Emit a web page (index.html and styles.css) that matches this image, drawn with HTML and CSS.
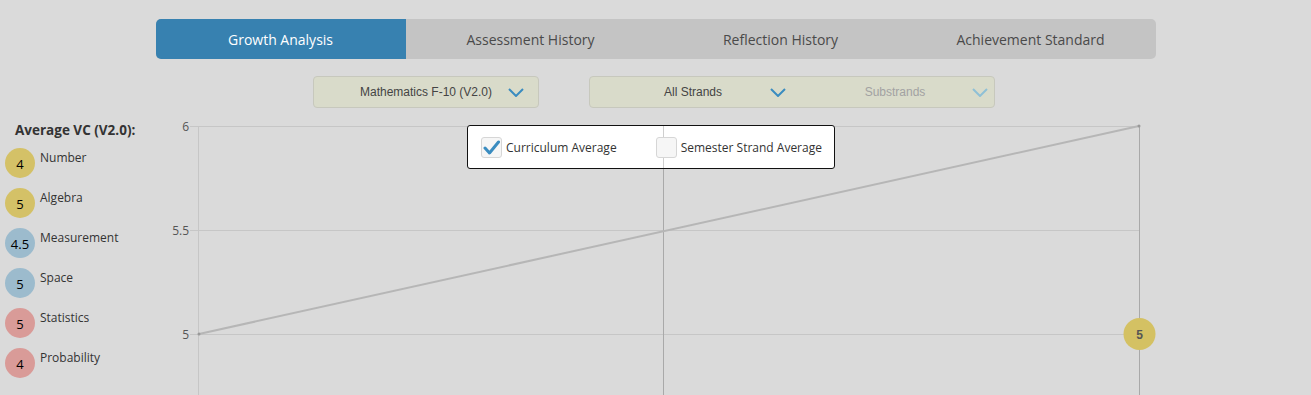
FILE: index.html
```html
<!DOCTYPE html>
<html lang="en">
<head>
    <meta charset="UTF-8">
    <title>Growth Analysis</title>
    <link rel="stylesheet" href="styles.css">
</head>
<body>
    <div class="tabs">
        <a href="#" class="tab active">Growth Analysis</a>
        <a href="#" class="tab">Assessment History</a>
        <a href="#" class="tab">Reflection History</a>
        <a href="#" class="tab">Achievement Standard</a>
    </div>

    <div class="filters">
        <div class="select select-curriculum">
            <span>Mathematics F-10 (V2.0)</span>
            <svg class="chevron" width="16" height="9" viewBox="0 0 16 9"><path d="M1 1 L8 8 L15 1" fill="none" stroke="#3a8cc0" stroke-width="2"/></svg>
        </div>
        <div class="select select-strands">
            <div class="half">
                <span>All Strands</span>
                <svg class="chevron" width="16" height="9" viewBox="0 0 16 9"><path d="M1 1 L8 8 L15 1" fill="none" stroke="#3a8cc0" stroke-width="2"/></svg>
            </div>
            <div class="half disabled">
                <span>Substrands</span>
                <svg class="chevron" width="16" height="9" viewBox="0 0 16 9"><path d="M1 1 L8 8 L15 1" fill="none" stroke="#8fc0d6" stroke-width="2"/></svg>
            </div>
        </div>
    </div>

    <div class="main">
        <div class="sidebar">
            <h3>Average VC (V2.0):</h3>
            <div class="strand"><span class="dot yellow">4</span><span class="name">Number</span></div>
            <div class="strand"><span class="dot yellow">5</span><span class="name">Algebra</span></div>
            <div class="strand"><span class="dot blue">4.5</span><span class="name">Measurement</span></div>
            <div class="strand"><span class="dot blue">5</span><span class="name">Space</span></div>
            <div class="strand"><span class="dot red">5</span><span class="name">Statistics</span></div>
            <div class="strand"><span class="dot red">4</span><span class="name">Probability</span></div>
        </div>

        <div class="chart">
            <svg width="1151" height="277" viewBox="0 0 1151 277">
                <g stroke="#c6c6c6" stroke-width="1">
                    <line x1="30" y1="8.5" x2="979" y2="8.5"/>
                    <line x1="30" y1="112.5" x2="979" y2="112.5"/>
                    <line x1="30" y1="216.5" x2="979" y2="216.5"/>
                    <line x1="38.5" y1="8" x2="38.5" y2="277"/>
                </g>
                <g stroke="#a9a9a9" stroke-width="1">
                    <line x1="503.5" y1="8" x2="503.5" y2="277"/>
                    <line x1="979.5" y1="8" x2="979.5" y2="277"/>
                </g>
                <g class="axis-label">
                    <text x="29" y="12.5" text-anchor="end">6</text>
                    <text x="29" y="116.5" text-anchor="end">5.5</text>
                    <text x="29" y="220.5" text-anchor="end">5</text>
                </g>
                <line x1="39" y1="216" x2="979" y2="8" stroke="#b6b6b6" stroke-width="2"/>
                <circle cx="39" cy="216" r="1.5" fill="#999"/>
                <circle cx="979" cy="8" r="1.5" fill="#999"/>
                <circle cx="979.5" cy="216" r="16" fill="#d4c163"/>
                <text class="point-label" x="979.5" y="220.5" text-anchor="middle">5</text>
            </svg>

            <div class="legend">
                <label class="legend-item">
                    <span class="box">
                        <svg width="17" height="15" viewBox="0 0 17 15"><path d="M2 8 L6.5 13 L15.5 2" fill="none" stroke="#3a8cc0" stroke-width="3" stroke-linecap="round" stroke-linejoin="round"/></svg>
                    </span>
                    Curriculum Average
                </label>
                <label class="legend-item">
                    <span class="box"></span>
                    Semester Strand Average
                </label>
            </div>
        </div>
    </div>
</body>
</html>
```

FILE: styles.css
```css
body {
    font-family: "Open Sans", Arial, sans-serif;
    margin: 0;
    padding: 0;
    background-color: #dadada;
    color: #444;
    height: 395px;
    overflow: hidden;
}

.tabs {
    display: flex;
    width: 1000px;
    height: 40px;
    margin: 19px auto 0;
    background-color: #c4c4c4;
    border-radius: 5px;
    overflow: hidden;
}

.tab {
    flex: 1;
    display: flex;
    align-items: center;
    justify-content: center;
    font-size: 14px;
    color: #4a4a4a;
    text-decoration: none;
}

.tab.active {
    background-color: #3781b0;
    color: #fff;
}

.filters {
    display: flex;
    gap: 50px;
    margin-top: 17px;
    padding-left: 313px;
}

.select {
    display: flex;
    align-items: center;
    height: 30px;
    background-color: #d9dbca;
    border: 1px solid #c7c8bd;
    border-radius: 4px;
    font-family: "Liberation Sans", Arial, sans-serif;
    font-size: 12px;
    color: #444;
}

.select-curriculum {
    width: 180px;
    padding: 0 14px 0 30px;
}

.select-curriculum span {
    flex: 1;
    text-align: center;
}

.select-strands {
    width: 404px;
}

.half {
    flex: 1;
    display: flex;
    align-items: center;
    padding: 0 6px 0 26px;
}

.half span {
    flex: 1;
    text-align: center;
}

.half.disabled {
    color: #a2a2a2;
}

.chevron {
    display: block;
}

.main {
    display: flex;
    margin-top: 10px;
}

.sidebar {
    width: 155px;
    padding-left: 5px;
}

.sidebar h3 {
    margin: 2px 0 8px 10px;
    font-size: 13.5px;
    line-height: 20px;
    font-weight: bold;
    color: #333;
}

.strand {
    display: flex;
    align-items: flex-start;
    gap: 5px;
    margin-bottom: 10px;
}

.dot {
    width: 30px;
    height: 30px;
    border-radius: 50%;
    display: flex;
    align-items: center;
    justify-content: center;
    font-size: 13px;
    color: #000;
    padding-top: 2px;
    box-sizing: border-box;
}

.dot.yellow {
    background-color: #d4c167;
}

.dot.blue {
    background-color: #9cbbcd;
}

.dot.red {
    background-color: #d99b98;
}

.strand .name {
    font-size: 12px;
    line-height: 20px;
    color: #333;
}

.chart {
    position: relative;
    width: 1151px;
    height: 277px;
}

.chart svg {
    display: block;
}

.axis-label text {
    font-family: "Open Sans", Arial, sans-serif;
    font-size: 12px;
    fill: #555;
}

.point-label {
    font-family: "Liberation Sans", Arial, sans-serif;
    font-size: 12px;
    font-weight: bold;
    fill: #555;
}

.legend {
    position: absolute;
    left: 307px;
    top: 7px;
    width: 368px;
    height: 44px;
    box-sizing: border-box;
    background-color: #fff;
    border: 1px solid #111;
    border-radius: 3px;
    display: flex;
    align-items: center;
    padding-left: 13px;
    gap: 39px;
}

.legend::before {
    content: "";
    position: absolute;
    left: 195px;
    top: 0;
    bottom: 0;
    width: 1px;
    background-color: #cfcfcf;
}

.legend-item {
    position: relative;
    display: flex;
    align-items: center;
    gap: 4px;
    font-size: 12px;
    color: #333;
}

.box {
    width: 19px;
    height: 19px;
    border: 1px solid #d6d6d6;
    border-radius: 3px;
    background-color: #f6f6f6;
    display: flex;
    align-items: center;
    justify-content: center;
}
```
